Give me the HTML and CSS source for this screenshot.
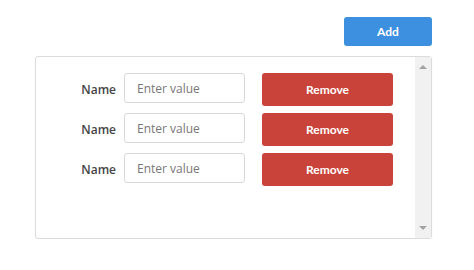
FILE: index.html
```html
<!DOCTYPE html>
<html lang="en">
<head>
    <meta charset="UTF-8">
    <meta name="viewport" content="width=device-width, initial-scale=1.0">
    <title>Fields</title>
    <link rel="stylesheet" href="styles.css">
</head>
<body>

<div class="toolbar">
    <button class="add-btn">Add</button>
</div>

<div class="panel">
    <div class="rows">
        <div class="row">
            <label>Name</label>
            <input type="text" placeholder="Enter value">
            <button class="remove-btn">Remove</button>
        </div>
        <div class="row">
            <label>Name</label>
            <input type="text" placeholder="Enter value">
            <button class="remove-btn">Remove</button>
        </div>
        <div class="row">
            <label>Name</label>
            <input type="text" placeholder="Enter value">
            <button class="remove-btn">Remove</button>
        </div>
    </div>
    <div class="scrollbar">
        <span class="arrow up"></span>
        <span class="arrow down"></span>
    </div>
</div>

</body>
</html>
```

FILE: styles.css
```css
body {
    margin: 0;
    padding: 17px 42px 0 35px;
    font-family: "Open Sans", "Noto Sans", sans-serif;
    background: #fff;
}

.toolbar {
    display: flex;
    justify-content: flex-end;
    margin-bottom: 10px;
}

.add-btn {
    width: 88px;
    height: 29px;
    border: none;
    border-radius: 3px;
    background: #3d8fe0;
    color: #fff;
    font-family: Lato, sans-serif;
    font-weight: bold;
    font-size: 12px;
}

.panel {
    display: flex;
    height: 181px;
    border: 1px solid #dcdcdc;
    border-radius: 3px;
    box-shadow: 0 1px 2px rgba(0, 0, 0, 0.06);
}

.rows {
    flex: 1;
    padding-top: 16px;
}

.row {
    display: flex;
    align-items: center;
    height: 33px;
    margin-bottom: 7px;
}

.row label {
    width: 80px;
    text-align: right;
    font-size: 12px;
    font-weight: 600;
    color: #444;
    margin-right: 8px;
}

.row input {
    width: 121px;
    height: 30px;
    box-sizing: border-box;
    border: 1px solid #d8d8d8;
    border-radius: 3px;
    padding: 0 12px;
    font-family: "Open Sans", sans-serif;
    font-size: 12px;
    margin-bottom: 3px;
}

.row input::placeholder {
    color: #777;
}

.remove-btn {
    width: 131px;
    height: 33px;
    margin-left: 17px;
    border: none;
    border-radius: 3px;
    background: #c9433a;
    color: #fff;
    font-family: Lato, sans-serif;
    font-weight: bold;
    font-size: 12px;
}

.scrollbar {
    width: 16px;
    background: #f1f1f1;
    display: flex;
    flex-direction: column;
    justify-content: space-between;
    align-items: center;
    padding: 8px 0;
}

.arrow {
    width: 0;
    height: 0;
    border-left: 4px solid transparent;
    border-right: 4px solid transparent;
}

.arrow.up {
    border-bottom: 4px solid #a3a3a3;
}

.arrow.down {
    border-top: 4px solid #a3a3a3;
}
```
